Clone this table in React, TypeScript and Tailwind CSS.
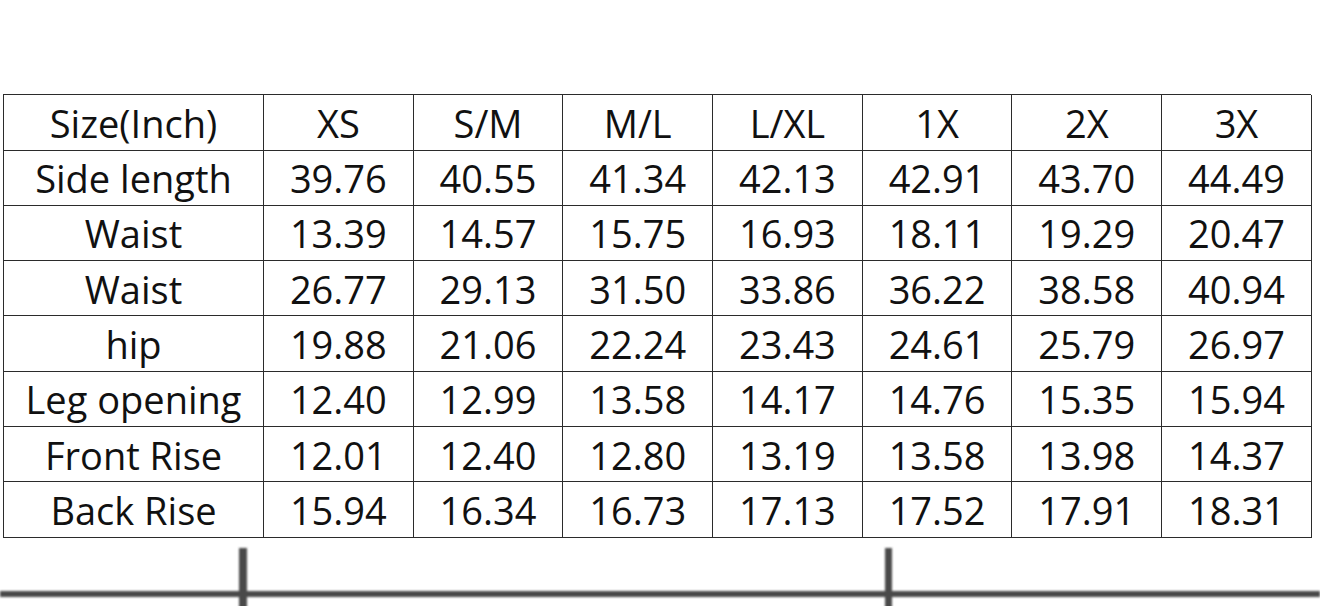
import React from "react";

const header = ["Size(Inch)", "XS", "S/M", "M/L", "L/XL", "1X", "2X", "3X"];
const rows: string[][] = [
  ["Side length", "39.76", "40.55", "41.34", "42.13", "42.91", "43.70", "44.49"],
  ["Waist", "13.39", "14.57", "15.75", "16.93", "18.11", "19.29", "20.47"],
  ["Waist", "26.77", "29.13", "31.50", "33.86", "36.22", "38.58", "40.94"],
  ["hip", "19.88", "21.06", "22.24", "23.43", "24.61", "25.79", "26.97"],
  ["Leg opening", "12.40", "12.99", "13.58", "14.17", "14.76", "15.35", "15.94"],
  ["Front Rise", "12.01", "12.40", "12.80", "13.19", "13.58", "13.98", "14.37"],
  ["Back Rise", "15.94", "16.34", "16.73", "17.13", "17.52", "17.91", "18.31"],
];

export default function App() {
  const all = [header, ...rows];
  return (
    <div
      className="w-[1320px] h-[606px] bg-white overflow-hidden flex flex-col"
      style={{ fontFamily: '"Open Sans", "Liberation Sans", sans-serif' }}
    >
      <div className="h-[95px]" />
      <div className="pl-[3px]">
        <div className="grid grid-cols-[260px_repeat(7,149.7px)] w-[1308px] border-l-[1.5px] border-t-[1.5px] border-[#2b2b2b]">
          {all.map((r, ri) =>
            r.map((c, ci) => (
              <div
                key={ri + "-" + ci}
                className="h-[55.3px] flex items-center justify-center border-r-[1.5px] border-b-[1.5px] border-[#2b2b2b] text-[38px] leading-none text-[#111] pt-[1px]"
              >
                {c}
              </div>
            ))
          )}
        </div>
      </div>
      <svg width="1320" height="69" className="block">
        <defs>
          <filter id="b" x="-10%" y="-50%" width="120%" height="200%">
            <feGaussianBlur stdDeviation="1.2" />
          </filter>
        </defs>
        <g filter="url(#b)" fill="#4a4a4a">
          <rect x="239" y="10" width="8" height="70" />
          <rect x="885" y="10" width="7" height="70" />
          <rect x="0" y="53" width="1320" height="6" />
        </g>
      </svg>
    </div>
  );
}
